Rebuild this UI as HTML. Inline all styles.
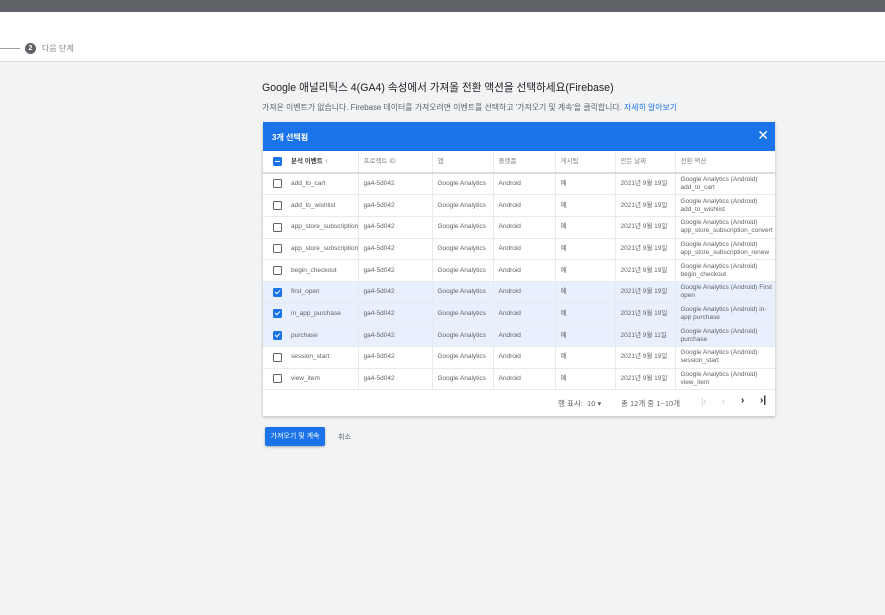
<!DOCTYPE html>
<html><head><meta charset="utf-8"><style>
*{box-sizing:border-box;margin:0;padding:0}
body{width:885px;height:615px;background:#f1f3f4;font-family:"Liberation Sans","Noto Sans CJK KR",sans-serif;position:relative;overflow:hidden;color:#3c4043}
.top{position:absolute;left:0;top:0;width:885px;height:12px;background:#5f6368}
.hdr{position:absolute;left:0;top:12px;width:885px;height:50px;background:#fff;border-bottom:1px solid #dadce0}
.line{position:absolute;left:0;top:36px;width:20px;height:1px;background:#9aa0a6}
.step{position:absolute;left:25px;top:31px;width:11px;height:11px;border-radius:50%;background:#5f6368;color:#fff;font-size:7px;text-align:center;line-height:11px;font-weight:bold}
.steplbl{position:absolute;left:42px;top:31px;font-size:8px;color:#80868b}
h1{position:absolute;left:262px;top:80px;font-size:10.6px;font-weight:normal;color:#202124}
.sub{position:absolute;left:262px;top:102px;font-size:7.9px;color:#5f6368}
.sub a{color:#1a73e8;text-decoration:none}
.card{position:absolute;left:263px;top:122px;width:512px;height:294px;background:#fff;box-shadow:0 1px 3px rgba(0,0,0,.25)}
.bar{height:29px;background:#1a73e8;color:#fff;font-size:8px;font-weight:bold;padding:10px 9px;position:relative}
.bar .x{position:absolute;right:6px;top:5px;font-size:14px;font-weight:normal}
table{border-collapse:collapse;width:512px;table-layout:fixed}
td,th{font-size:6.5px;color:#5f6368;font-weight:normal;text-align:left;padding:0 5px;border-left:1px solid #e8eaed;white-space:nowrap;overflow:hidden;line-height:8px}
td:first-child,th:first-child{border-left:none;padding:0}
th{height:22px;border-bottom:2px solid #dadce0;color:#80868b}
td{height:21.7px;border-bottom:1px solid #e8eaed}
tr.s td{background:#e8f0fe}
.cb{display:inline-block;width:9px;height:9px;border:1.3px solid #5f6368;border-radius:1.5px;vertical-align:middle;margin-left:10px}
.cb.on{background:#1a73e8;border-color:#1a73e8;position:relative}
.cb.on:after{content:"";position:absolute;left:2px;top:0px;width:2px;height:4px;border:solid #fff;border-width:0 1.3px 1.3px 0;transform:rotate(45deg)}
.cb.ind{background:#1a73e8;border-color:#1a73e8;position:relative}
.cb.ind:after{content:"";position:absolute;left:1px;top:3px;width:4.5px;height:1.3px;background:#fff}
.ft{height:26px;font-size:7.5px;color:#5f6368;position:relative}
.btn{position:absolute;left:265px;top:427px;width:60px;height:19px;background:#1a73e8;color:#fff;font-size:7px;text-align:center;line-height:19px;border-radius:2px;box-shadow:0 1px 2px rgba(0,0,0,.3)}
.cancel{position:absolute;left:338px;top:432px;font-size:7px;color:#5f6368}
</style></head><body>
<div class="top"></div>
<div class="hdr"><div class="line"></div><div class="step">2</div><div class="steplbl">다음 단계</div></div>
<h1>Google 애널리틱스 4(GA4) 속성에서 가져올 전환 액션을 선택하세요(Firebase)</h1>
<div class="sub">가져온 이벤트가 없습니다. Firebase 데이터를 가져오려면 이벤트를 선택하고 '가져오기 및 계속'을 클릭합니다. <a>자세히 알아보기</a></div>
<div class="card">
<div class="bar">3개 선택됨<span class="x">✕</span></div>
<table>
<colgroup><col style="width:23px"><col style="width:72px"><col style="width:74px"><col style="width:61px"><col style="width:62px"><col style="width:60px"><col style="width:60px"><col style="width:100px"></colgroup>
<tr><th><span class="cb ind"></span></th><th style="border-left:none;color:#3c4043;font-weight:bold">분석 이벤트 ↑</th><th>프로젝트 ID</th><th>앱</th><th>플랫폼</th><th>게시됨</th><th>만든 날짜</th><th>전환 액션</th></tr>
<tr><td><span class="cb"></span></td><td style="border-left:none">add_to_cart</td><td>ga4-5d042</td><td>Google Analytics</td><td>Android</td><td>예</td><td>2021년 9월 19일</td><td>Google Analytics (Android)<br>add_to_cart</td></tr>
<tr><td><span class="cb"></span></td><td style="border-left:none">add_to_wishlist</td><td>ga4-5d042</td><td>Google Analytics</td><td>Android</td><td>예</td><td>2021년 9월 19일</td><td>Google Analytics (Android)<br>add_to_wishlist</td></tr>
<tr><td><span class="cb"></span></td><td style="border-left:none">app_store_subscription_c</td><td>ga4-5d042</td><td>Google Analytics</td><td>Android</td><td>예</td><td>2021년 9월 19일</td><td>Google Analytics (Android)<br>app_store_subscription_convert</td></tr>
<tr><td><span class="cb"></span></td><td style="border-left:none">app_store_subscription_re</td><td>ga4-5d042</td><td>Google Analytics</td><td>Android</td><td>예</td><td>2021년 9월 19일</td><td>Google Analytics (Android)<br>app_store_subscription_renew</td></tr>
<tr><td><span class="cb"></span></td><td style="border-left:none">begin_checkout</td><td>ga4-5d042</td><td>Google Analytics</td><td>Android</td><td>예</td><td>2021년 9월 19일</td><td>Google Analytics (Android)<br>begin_checkout</td></tr>
<tr class="s"><td><span class="cb on"></span></td><td style="border-left:none">first_open</td><td>ga4-5d042</td><td>Google Analytics</td><td>Android</td><td>예</td><td>2021년 9월 19일</td><td>Google Analytics (Android) First<br>open</td></tr>
<tr class="s"><td><span class="cb on"></span></td><td style="border-left:none">in_app_purchase</td><td>ga4-5d042</td><td>Google Analytics</td><td>Android</td><td>예</td><td>2021년 9월 19일</td><td>Google Analytics (Android) in-<br>app purchase</td></tr>
<tr class="s"><td><span class="cb on"></span></td><td style="border-left:none">purchase</td><td>ga4-5d042</td><td>Google Analytics</td><td>Android</td><td>예</td><td>2021년 9월 11일</td><td>Google Analytics (Android)<br>purchase</td></tr>
<tr><td><span class="cb"></span></td><td style="border-left:none">session_start</td><td>ga4-5d042</td><td>Google Analytics</td><td>Android</td><td>예</td><td>2021년 9월 19일</td><td>Google Analytics (Android)<br>session_start</td></tr>
<tr><td><span class="cb"></span></td><td style="border-left:none">view_item</td><td>ga4-5d042</td><td>Google Analytics</td><td>Android</td><td>예</td><td>2021년 9월 19일</td><td>Google Analytics (Android)<br>view_item</td></tr>
</table>
<div class="ft">
<span style="position:absolute;left:295px;top:8px">행 표시: &nbsp;10 ▾</span>
<span style="position:absolute;left:358px;top:8px">총 12개 중 1~10개</span>
<span style="position:absolute;left:438px;top:6px;color:#c0c4c8;font-size:9px">|‹</span>
<span style="position:absolute;left:459px;top:6px;color:#c0c4c8;font-size:9px">‹</span>
<span style="position:absolute;left:478px;top:5px;color:#202124;font-size:10px;font-weight:bold">›</span>
<span style="position:absolute;left:497px;top:5px;color:#202124;font-size:10px;font-weight:bold">›|</span>
</div>
</div>
<div class="btn">가져오기 및 계속</div>
<div class="cancel">취소</div>
</body></html>
